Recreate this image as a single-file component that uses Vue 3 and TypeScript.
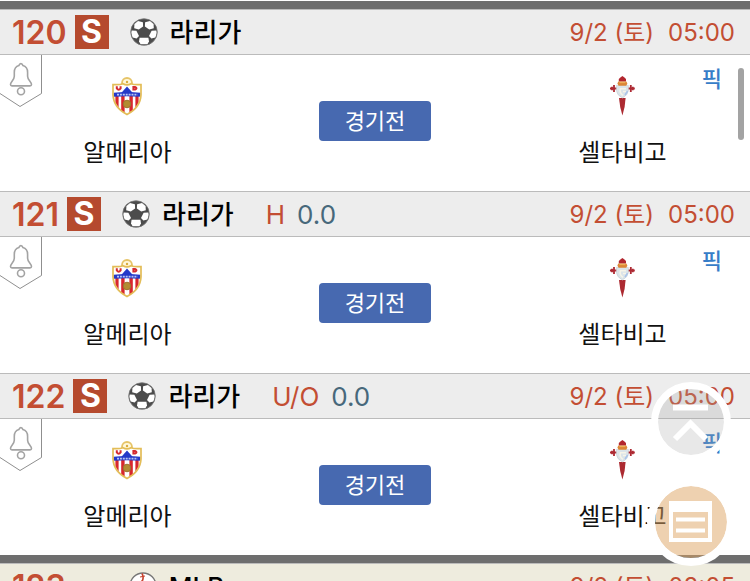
<script setup lang="ts">
interface Game {
  no: number
  single: boolean
  sport: 'soccer' | 'baseball'
  league: string
  market?: string
  line?: string
  date: string
  time: string
  home: string
  away: string
  status: string
}

const base = {
  single: true,
  sport: 'soccer' as const,
  league: '라리가',
  date: '9/2 (토)',
  time: '05:00',
  home: '알메리아',
  away: '셀타비고',
  status: '경기전',
}

const groups: { key: string; games: Game[] }[] = [
  {
    key: 'laliga',
    games: [
      { ...base, no: 120 },
      { ...base, no: 121, market: 'H', line: '0.0' },
      { ...base, no: 122, market: 'U/O', line: '0.0' },
    ],
  },
  {
    key: 'mlb',
    games: [
      { no: 123, single: false, sport: 'baseball', league: 'MLB', date: '9/2 (토)', time: '08:05', home: '', away: '', status: '' },
    ],
  },
]
</script>

<template>
  <main class="page">
    <section v-for="group in groups" :key="group.key" class="group">
      <article v-for="game in group.games" :key="game.no" class="game">
        <header class="head" :class="{ warm: game.sport === 'baseball' }">
          <span class="no">{{ game.no }}</span>
          <span class="single" :class="{ empty: !game.single }">{{ game.single ? 'S' : '' }}</span>
          <svg v-if="game.sport === 'soccer'" class="ball" viewBox="0 0 28 28" aria-hidden="true">
            <circle cx="14" cy="14" r="13.3" fill="#4c4c4c" />
            <g fill="#fff">
              <path d="M8 3 12.9 4.2 13.1 8.4 8.8 11.6 4.2 10.2 4.4 6Z" />
              <path d="M20 3 15.1 4.2 14.9 8.4 19.2 11.6 23.8 10.2 23.6 6Z" />
              <path d="M1.6 12.4 6.4 12.8 9 18 6.6 20.6 2.6 19.4 1.2 15Z" />
              <path d="M26.4 12.4 21.6 12.8 19 18 21.4 20.6 25.4 19.4 26.8 15Z" />
              <path d="M9.6 19.8H18.4L19 23.6 17.4 26.2H10.6L9 23.6Z" />
            </g>
            <circle cx="14" cy="14" r="13.3" fill="none" stroke="#777" stroke-width="0.8" />
          </svg>
          <svg v-else class="ball" viewBox="0 0 28 28" aria-hidden="true">
            <circle cx="14" cy="14" r="13" fill="#fff" stroke="#777" stroke-width="1.4" />
            <path d="M13 1.5Q16 7 11 12T4 19" fill="none" stroke="#c8432f" stroke-width="1.6" />
            <path d="M11 5 16 4M12 9 16 10" stroke="#c8432f" stroke-width="1.2" />
          </svg>
          <h2 class="league">{{ game.league }}</h2>
          <span v-if="game.market" class="market">{{ game.market }}</span>
          <span v-if="game.line" class="line">{{ game.line }}</span>
          <span class="when"><span>{{ game.date }}</span><time>{{ game.time }}</time></span>
        </header>

        <div class="body">
          <button class="bell" type="button" aria-label="알림">
            <svg viewBox="0 0 42 53" aria-hidden="true">
              <path d="M41.5 0V38.5L20 51.5 0 38.5" fill="#fff" stroke="#8f8f8f" />
              <g fill="none" stroke="#a3a3a3" stroke-width="1.6">
                <path d="M20.9 8.6C19.7 8.6 19.2 9.6 18.9 10.6 15.8 11.5 14.3 14 14.3 17.4V21.2C14.3 25 10.5 26.6 10.5 29.6 10.5 30.6 11 30.9 12 30.9H30C31 30.9 31.5 30.6 31.5 29.6 31.5 26.6 27.6 25 27.6 21.2V17.4C27.6 14 26 11.5 22.9 10.6 22.6 9.6 22.1 8.6 20.9 8.6Z" />
                <circle cx="21" cy="36.3" r="3.5" />
              </g>
            </svg>
          </button>
          <a class="pick" href="#pick">픽</a>
          <div class="team">
            <svg v-if="game.home" class="crest" viewBox="0 0 32 40" aria-hidden="true">
              <circle cx="16" cy="6" r="5" fill="#fff8dc" stroke="#e6c468" stroke-width="1.8" />
              <circle cx="16" cy="5" r="1.2" fill="#d9ac3d" />
              <path d="M2 7.6Q9 8 12 6.8 16 9 20 6.8 23 8 30 7.6V18Q29.4 30.5 16 37.6 2.6 30.5 2 18Z" fill="#fff" />
              <path d="M4.4 19H7.6V30.4L4.4 26ZM10.2 19H13.6V36L10.2 33.8ZM18.4 19H21.8V33.8L18.4 36ZM24.4 19H27.6V26L24.4 30.4Z" fill="#d8272c" />
              <path d="M16 9.6 22 16.2H10Z" fill="#2439c9" />
              <path d="M2.6 15.8Q16 14.4 29.4 15.8V19.8Q16 18.8 2.6 19.8Z" fill="#2439c9" />
              <path d="M6 17.6H26.5" stroke="#b7c3f2" stroke-width="1.6" stroke-dasharray="2 0.9" />
              <path d="M5.8 9.2V11.4Q7.7 14 9.6 11.4V9.2M22.4 10H24Q27 11.2 24 12.6H22.4Z" fill="none" stroke="#d42a30" stroke-width="2" />
              <circle cx="16" cy="27" r="3.8" fill="#b38b32" stroke="#9c7430" />
              <path d="M2 7.6Q9 8 12 6.8 16 9 20 6.8 23 8 30 7.6V18Q29.4 30.5 16 37.6 2.6 30.5 2 18Z" fill="none" stroke="#e3bd57" stroke-width="1.7" />
            </svg>
            <span class="name">{{ game.home }}</span>
          </div>
          <span v-if="game.status" class="status">{{ game.status }}</span>
          <div class="team">
            <svg v-if="game.away" class="crest" viewBox="0 0 32 40" aria-hidden="true">
              <path d="M13 21H19.6L18.6 30 16.4 38.6 14.2 30Z" fill="#ac2a31" />
              <path d="M16.4-1 18.4 0.6 20 2V4.4H12.8V2L14.4 0.6Z" fill="#b2262e" />
              <path d="M4 11.5H11M21.6 11.5H28.8M8 8V15M24.8 8V15M6 9.8V13.2M26.8 9.8V13.2" fill="none" stroke="#ad2932" stroke-width="1.8" />
              <path d="M10.4 8.4Q16.4 7 22.4 8.4V13.5Q22 18 16.4 21 10.8 18 10.4 13.5Z" fill="#dbe4e9" stroke="#c5ccd0" stroke-width="0.6" />
              <path d="M20 11.8H14.4Q13.2 16 17 18.4M20 14.4H17" fill="none" stroke="#f6f4e8" stroke-width="1.5" />
              <path d="M19 18 21.6 14" stroke="#a9c4ea" stroke-width="1.4" />
              <path d="M12.4 4.4H20.4L21.4 6.6 20.2 8.8H12.6L11.4 6.6Z" fill="#dc8636" />
              <path d="M13.4 5.6H19.4" stroke="#f0b45a" />
            </svg>
            <span class="name">{{ game.away }}</span>
          </div>
        </div>
      </article>
    </section>

    <div class="thumb" aria-hidden="true"></div>

    <nav class="floating">
      <button class="round top" type="button" aria-label="맨 위로">
        <svg viewBox="0 0 66 66" aria-hidden="true">
          <path d="M15 18.5H50" stroke="#fff" stroke-width="6" />
          <path d="M17 50 32.5 34.5 48 50" fill="none" stroke="#fff" stroke-width="6" />
        </svg>
      </button>
      <button class="round list" type="button" aria-label="목록">
        <svg viewBox="0 0 72 72" aria-hidden="true">
          <path fill="#fff" fill-rule="evenodd" d="M14 15H57V56H14ZM18 26V52H53V26Z" />
          <path d="M21 33.5H50M21 44.5H50" stroke="#fff" stroke-width="4" />
        </svg>
      </button>
    </nav>
  </main>
</template>

<style>
html {
  scrollbar-width: none;
}
body {
  margin: 0;
  background: #fff;
}
</style>

<style scoped>
.page {
  height: 100vh;
  overflow: hidden;
  padding-top: 1px;
  box-sizing: border-box;
  font-family: Inter, "Noto Sans CJK KR", sans-serif;
  color: #111;
}
.group {
  border-top: 8px solid #6e6e6e;
}
.head {
  display: flex;
  align-items: center;
  height: 44px;
  padding: 0 15px 0 12px;
  border-top: 1px solid #bbb;
  border-bottom: 1px solid #bbb;
  background: #ededed;
  line-height: 42px;
  white-space: nowrap;
}
.head.warm {
  background: #eeecde;
}
.no,
.league,
.market,
.line,
.when {
  padding-top: 2px;
}
.no {
  color: #c34e33;
  font-size: 32px;
  font-weight: 600;
}
.single {
  width: 34px;
  height: 34px;
  margin-left: 8px;
  background: #b54a2e;
  color: #fff;
  font-size: 32px;
  font-weight: 700;
  line-height: 34px;
  text-align: center;
}
.single.empty {
  background: none;
}
.ball {
  width: 28px;
  height: 28px;
  margin-left: 21px;
}
.league {
  margin: 0 0 0 12px;
  color: #000;
  font-size: 26px;
  font-weight: 500;
}
.market,
.line {
  color: #c34e33;
  font-size: 26px;
}
.market {
  margin-left: 32px;
}
.line {
  margin-left: 12px;
  color: #47687b;
}
.when {
  display: flex;
  gap: 14px;
  margin-left: auto;
  color: #c34e33;
  font-size: 24px;
}
.body {
  position: relative;
  display: grid;
  grid-template-columns: 17fr 16fr 17fr;
  justify-items: center;
  align-items: start;
  height: 136px;
  background: #fff;
}
.bell {
  position: absolute;
  top: 0;
  left: 0;
  padding: 0;
  border: 0;
  background: none;
}
.bell svg {
  display: block;
  width: 42px;
  height: 53px;
}
.pick {
  position: absolute;
  top: 7px;
  right: 28px;
  color: #377dc8;
  font-size: 22px;
  font-weight: 500;
  line-height: 34px;
  text-decoration: none;
}
.team {
  display: flex;
  flex-direction: column;
  align-items: center;
  gap: 18px;
  padding-top: 22px;
}
.crest {
  width: 32px;
  height: 40px;
  overflow: visible;
}
.name {
  font-size: 24px;
  line-height: 36px;
}
.status {
  width: 112px;
  margin-top: 46px;
  border-radius: 4px;
  background: #4769b0;
  color: #fff;
  font-size: 22px;
  line-height: 40px;
  text-align: center;
}
.thumb {
  position: fixed;
  top: 68px;
  right: 6px;
  width: 6px;
  height: 72px;
  border-radius: 3px;
  background: #a3a3a3;
}
.floating {
  position: fixed;
  right: 15px;
  bottom: 15px;
  display: flex;
  flex-direction: column;
  align-items: center;
  gap: 16px;
}
.round {
  padding: 0;
  border: 7px solid #fff;
  border-radius: 50%;
  background-clip: padding-box;
}
.round svg {
  display: block;
  width: 66px;
  height: 66px;
}
.top {
  background-color: rgba(165, 165, 165, 0.25);
}
.list {
  border-width: 8px;
  background-color: rgba(222, 164, 98, 0.5);
}
.list svg {
  width: 72px;
  height: 72px;
}
</style>
